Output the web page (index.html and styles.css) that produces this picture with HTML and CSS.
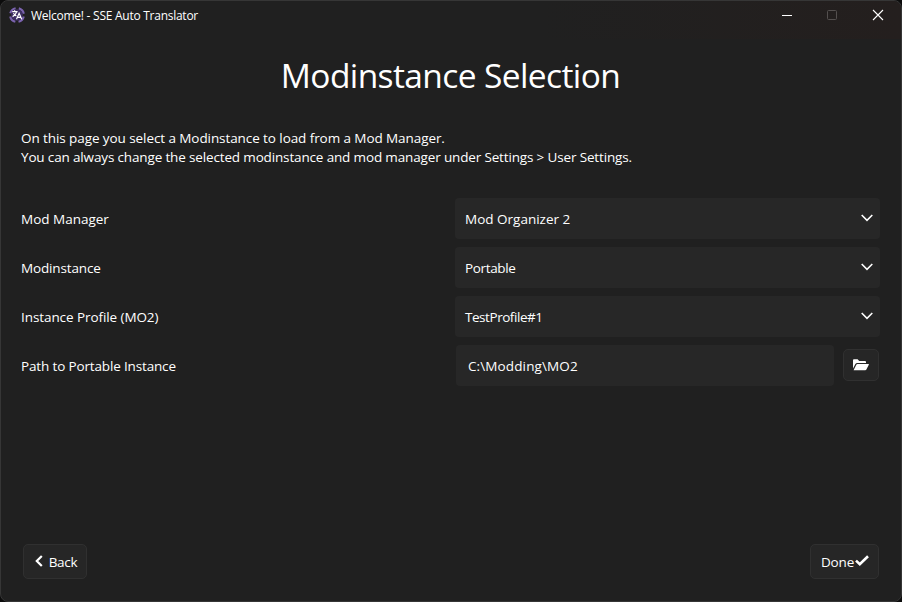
FILE: index.html
```html
<!DOCTYPE html>
<html lang="en">
<head>
<meta charset="utf-8">
<title>Welcome! - SSE Auto Translator</title>
<link rel="stylesheet" href="styles.css">
</head>
<body>
<div class="window">
  <header class="titlebar">
    <svg class="logo" width="16" height="16" viewBox="0 0 16 16" fill="none">
      <circle cx="8" cy="8" r="6.9" stroke="#7a62ad" stroke-width="2.2" stroke-dasharray="7.6 3.24" stroke-dashoffset="-1.62"/>
      <circle cx="8" cy="8" r="5.8" fill="#3d2e63"/>
      <path d="M3.2 4.6h5.4M5.6 3.3v1.3M7.6 4.8C7 7 5.6 8.6 3.6 9.6M4.4 6.2c.8 1.3 1.7 2.2 3 2.8M7.5 12.2l2.6-6 2.6 6M8.4 10.4h3.4" stroke="#fff" stroke-width="1.2"/>
    </svg>
    <span class="caption">Welcome! - SSE Auto Translator</span>
    <div class="controls">
      <svg width="46" height="30" viewBox="0 0 46 30"><path d="M18 15.5h10" stroke="#fff"/></svg>
      <svg width="45" height="30" viewBox="0 0 45 30"><rect x="17.5" y="10.5" width="9" height="9" rx="1" fill="none" stroke="#54504f"/></svg>
      <svg width="46" height="30" viewBox="0 0 46 30"><path d="M18 10l10 10M28 10L18 20" stroke="#fff" stroke-width="1.1"/></svg>
    </div>
  </header>
  <main class="page">
    <h1>Modinstance Selection</h1>
    <p class="intro"><span class="lead">On this page you select a Modinstance to load from a Mod Manager.</span><br>You can always change the selected modinstance and mod manager under Settings &gt; User Settings.</p>
    <div class="form">
      <label class="loose">Mod Manager</label>
      <div class="select"><span class="loose">Mod Organizer 2</span><svg width="12" height="8" viewBox="0 0 12 8"><path d="M.7 1L6 6.3 11.3 1"/></svg></div>
      <label>Modinstance</label>
      <div class="select"><span class="tight">Portable</span><svg width="12" height="8" viewBox="0 0 12 8"><path d="M.7 1L6 6.3 11.3 1"/></svg></div>
      <label class="lead">Instance Profile (MO2)</label>
      <div class="select"><span class="tighter">TestProfile#1</span><svg width="12" height="8" viewBox="0 0 12 8"><path d="M.7 1L6 6.3 11.3 1"/></svg></div>
      <label>Path to Portable Instance</label>
      <div class="path">
        <div class="input"><span>C:\Modding\MO2</span></div>
        <div class="button browse"><svg width="16" height="12" viewBox="0 0 16 12" fill="#fff"><path d="M0 9.5V1.2Q0 .3.9.3H4.6L6.2 1.9H12Q13 1.9 13 2.9V4H4.2Q3 4 2.4 5Z"/><path d="M.6 11.3L3.3 5.7Q3.7 5 4.5 5H15.4Q16.2 5 15.8 5.8L13.4 10.5Q13 11.3 12.2 11.3Z"/></svg></div>
      </div>
    </div>
    <footer class="nav">
      <div class="button back"><svg width="8" height="12" viewBox="0 0 8 12"><path d="M6.8 1L1.8 6l5 5" fill="none" stroke="#fff" stroke-width="2.2"/></svg><span>Back</span></div>
      <div class="button done"><span>Done</span><svg width="14" height="11" viewBox="0 0 14 11"><path d="M1 5.6l3.8 3.6L13 1.3" fill="none" stroke="#fff" stroke-width="2.6"/></svg></div>
    </footer>
  </main>
</div>
</body>
</html>
```
FILE: styles.css
```css
* { box-sizing: border-box; }
body {
  margin: 0;
  background: #0c0c0c;
  color: #fff;
  font: 13.5px/19px "Open Sans", "Noto Sans", sans-serif;
  letter-spacing: -0.15px;
}
.window {
  width: 902px;
  height: 602px;
  display: flex;
  flex-direction: column;
  border: 1px solid #363636;
  border-radius: 8px;
  background: #202020;
  overflow: hidden;
}
.titlebar {
  height: 38px;
  display: flex;
  align-items: flex-start;
  padding-left: 8px;
  background: linear-gradient(90deg, #202020 60%, #241f1e);
}
.logo { margin-top: 6px; }
.caption { margin: 5px 0 0 6px; font-size: 12px; letter-spacing: -0.26px; }
.controls { display: flex; margin: -1px 0 0 auto; }
.controls svg { display: block; }
.page {
  flex: 1;
  display: flex;
  flex-direction: column;
  padding: 0 21px 22px 20px;
}
h1 {
  margin: 12px 0 0;
  text-align: center;
  font-size: 33.5px;
  line-height: 48px;
  font-weight: 400;
  letter-spacing: -0.6px;
}
.intro { margin: 30px 0 0; white-space: nowrap; }
.lead { letter-spacing: -0.08px; }
.loose { letter-spacing: 0; }
.tight { letter-spacing: -0.35px; }
.tighter { letter-spacing: -0.45px; }
.form {
  display: grid;
  grid-template-columns: 434px 425px;
  grid-auto-rows: 41px;
  row-gap: 8px;
  align-items: center;
  margin-top: 31px;
}
.form label, .select span, .input span { padding-top: 2px; }
.select, .input {
  height: 41px;
  display: flex;
  align-items: center;
  border-radius: 4px;
  background: #272727;
}
.select { justify-content: space-between; padding: 0 7px 0 10px; }
.select svg { fill: none; stroke: #fff; stroke-width: 1.6; margin-top: -1px; }
.path { display: flex; align-items: center; justify-content: space-between; padding: 0 1px; }
.input { width: 378px; padding-left: 12px; letter-spacing: 0.12px; }
.button {
  display: flex;
  align-items: center;
  justify-content: center;
  border: 1px solid #303030;
  border-radius: 5px;
  background: #262626;
}
.browse { width: 36px; height: 32px; margin-top: -1px; }
.nav { display: flex; justify-content: space-between; margin-top: auto; padding: 0 1px 0 2px; }
.back, .done { height: 35px; }
.back span, .done span { padding-top: 2px; }
.back { width: 64px; gap: 6px; padding-left: 2px; letter-spacing: -0.3px; }
.done { width: 69px; gap: 1px; padding-left: 1px; }
.back svg, .done svg { margin-top: -2px; }
```
